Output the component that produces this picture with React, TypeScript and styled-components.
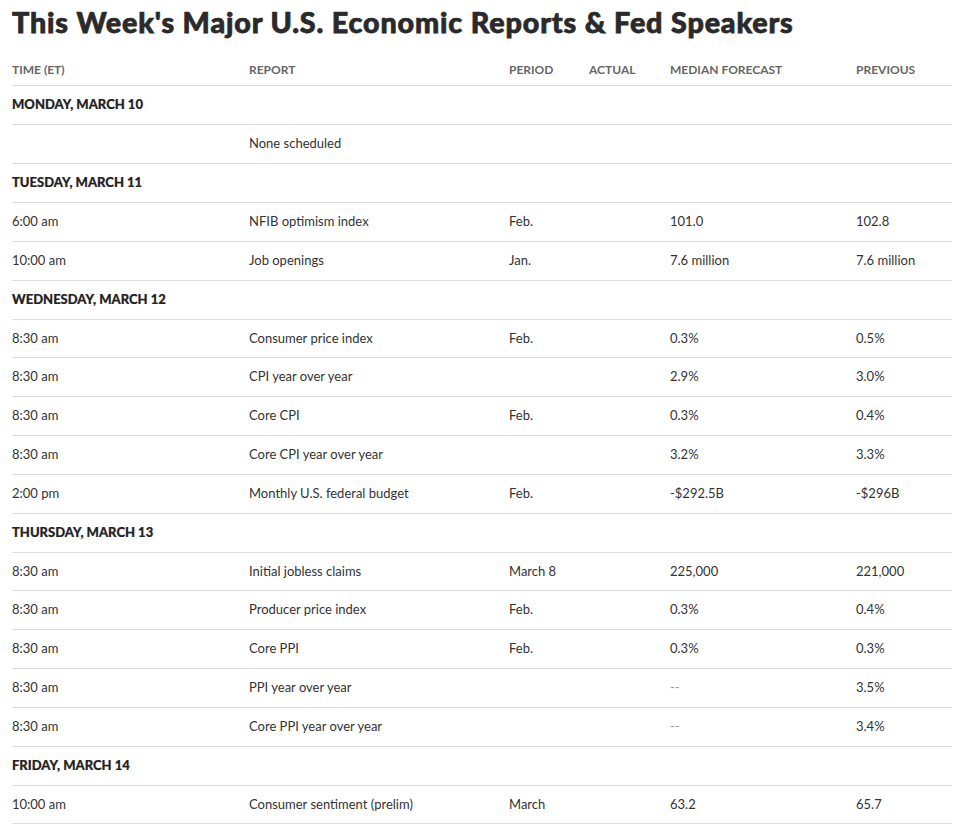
import React from "react";
import styled, { createGlobalStyle } from "styled-components";

type Row = {
  time: string;
  report: string;
  period?: string;
  actual?: string;
  forecast?: string;
  previous?: string;
};

type Day = {
  label: string;
  rows: Row[];
};

const days: Day[] = [
  {
    label: "Monday, March 10",
    rows: [{ time: "", report: "None scheduled" }],
  },
  {
    label: "Tuesday, March 11",
    rows: [
      { time: "6:00 am", report: "NFIB optimism index", period: "Feb.", forecast: "101.0", previous: "102.8" },
      { time: "10:00 am", report: "Job openings", period: "Jan.", forecast: "7.6 million", previous: "7.6 million" },
    ],
  },
  {
    label: "Wednesday, March 12",
    rows: [
      { time: "8:30 am", report: "Consumer price index", period: "Feb.", forecast: "0.3%", previous: "0.5%" },
      { time: "8:30 am", report: "CPI year over year", forecast: "2.9%", previous: "3.0%" },
      { time: "8:30 am", report: "Core CPI", period: "Feb.", forecast: "0.3%", previous: "0.4%" },
      { time: "8:30 am", report: "Core CPI year over year", forecast: "3.2%", previous: "3.3%" },
      { time: "2:00 pm", report: "Monthly U.S. federal budget", period: "Feb.", forecast: "-$292.5B", previous: "-$296B" },
    ],
  },
  {
    label: "Thursday, March 13",
    rows: [
      { time: "8:30 am", report: "Initial jobless claims", period: "March 8", forecast: "225,000", previous: "221,000" },
      { time: "8:30 am", report: "Producer price index", period: "Feb.", forecast: "0.3%", previous: "0.4%" },
      { time: "8:30 am", report: "Core PPI", period: "Feb.", forecast: "0.3%", previous: "0.3%" },
      { time: "8:30 am", report: "PPI year over year", forecast: "--", previous: "3.5%" },
      { time: "8:30 am", report: "Core PPI year over year", forecast: "--", previous: "3.4%" },
    ],
  },
  {
    label: "Friday, March 14",
    rows: [
      { time: "10:00 am", report: "Consumer sentiment (prelim)", period: "March", forecast: "63.2", previous: "65.7" },
    ],
  },
];

const columns = [
  { title: "Time (ET)", width: 237 },
  { title: "Report", width: 260 },
  { title: "Period", width: 80 },
  { title: "Actual", width: 81 },
  { title: "Median Forecast", width: 186 },
  { title: "Previous", width: 96 },
];

export default function App() {
  return (
    <>
      <GlobalStyle />
      <Page>
        <Title>This Week's Major U.S. Economic Reports &amp; Fed Speakers</Title>
        <Table>
          <colgroup>
            {columns.map((c) => (
              <col key={c.title} style={{ width: c.width }} />
            ))}
          </colgroup>
          <thead>
            <tr>
              {columns.map((c) => (
                <HeadCell key={c.title}>{c.title}</HeadCell>
              ))}
            </tr>
          </thead>
          <tbody>
            {days.map((day) => (
              <React.Fragment key={day.label}>
                <tr>
                  <DayCell colSpan={6}>{day.label}</DayCell>
                </tr>
                {day.rows.map((r, i) => (
                  <tr key={i}>
                    <Cell>{r.time}</Cell>
                    <Cell>{r.report}</Cell>
                    <Cell>{r.period}</Cell>
                    <Cell>{r.actual}</Cell>
                    <Cell $muted={r.forecast === "--"}>{r.forecast}</Cell>
                    <Cell>{r.previous}</Cell>
                  </tr>
                ))}
              </React.Fragment>
            ))}
          </tbody>
        </Table>
      </Page>
    </>
  );
}

const GlobalStyle = createGlobalStyle`
  body {
    margin: 0;
    background: #ffffff;
    font-family: Lato, "Open Sans", Arial, sans-serif;
    color: #333333;
  }
`;

const Page = styled.div`
  width: 940px;
  padding: 6px 6px 0 12px;
`;

const Title = styled.h1`
  margin: 0;
  font-family: Lato, sans-serif;
  font-size: 28.7px;
  font-weight: 900;
  line-height: 33.6px;
  letter-spacing: 0.85px;
  color: #2a2a2a;
  -webkit-text-stroke: 0.75px #2a2a2a;
  white-space: nowrap;
`;

const Table = styled.table`
  width: 940px;
  border-collapse: collapse;
  table-layout: fixed;
`;

const HeadCell = styled.th`
  padding: 22px 0 8px;
  text-align: left;
  font-size: 12px;
  line-height: 15.84px;
  font-weight: 700;
  text-transform: uppercase;
  color: #666666;
  border-bottom: 1px solid #dddddd;
`;

const DayCell = styled.td`
  padding: 11px 0 11px;
  font-size: 13px;
  line-height: 15.84px;
  font-weight: 900;
  text-transform: uppercase;
  color: #222222;
  -webkit-text-stroke: 0.2px #222222;
  border-bottom: 1px solid #dddddd;
`;

const Cell = styled.td<{ $muted?: boolean }>`
  padding: 11px 0 11px;
  font-size: 13px;
  line-height: 15.84px;
  color: ${({ $muted }) => ($muted ? "#999999" : "#333333")};
  border-bottom: 1px solid #dddddd;
  white-space: nowrap;
`;
